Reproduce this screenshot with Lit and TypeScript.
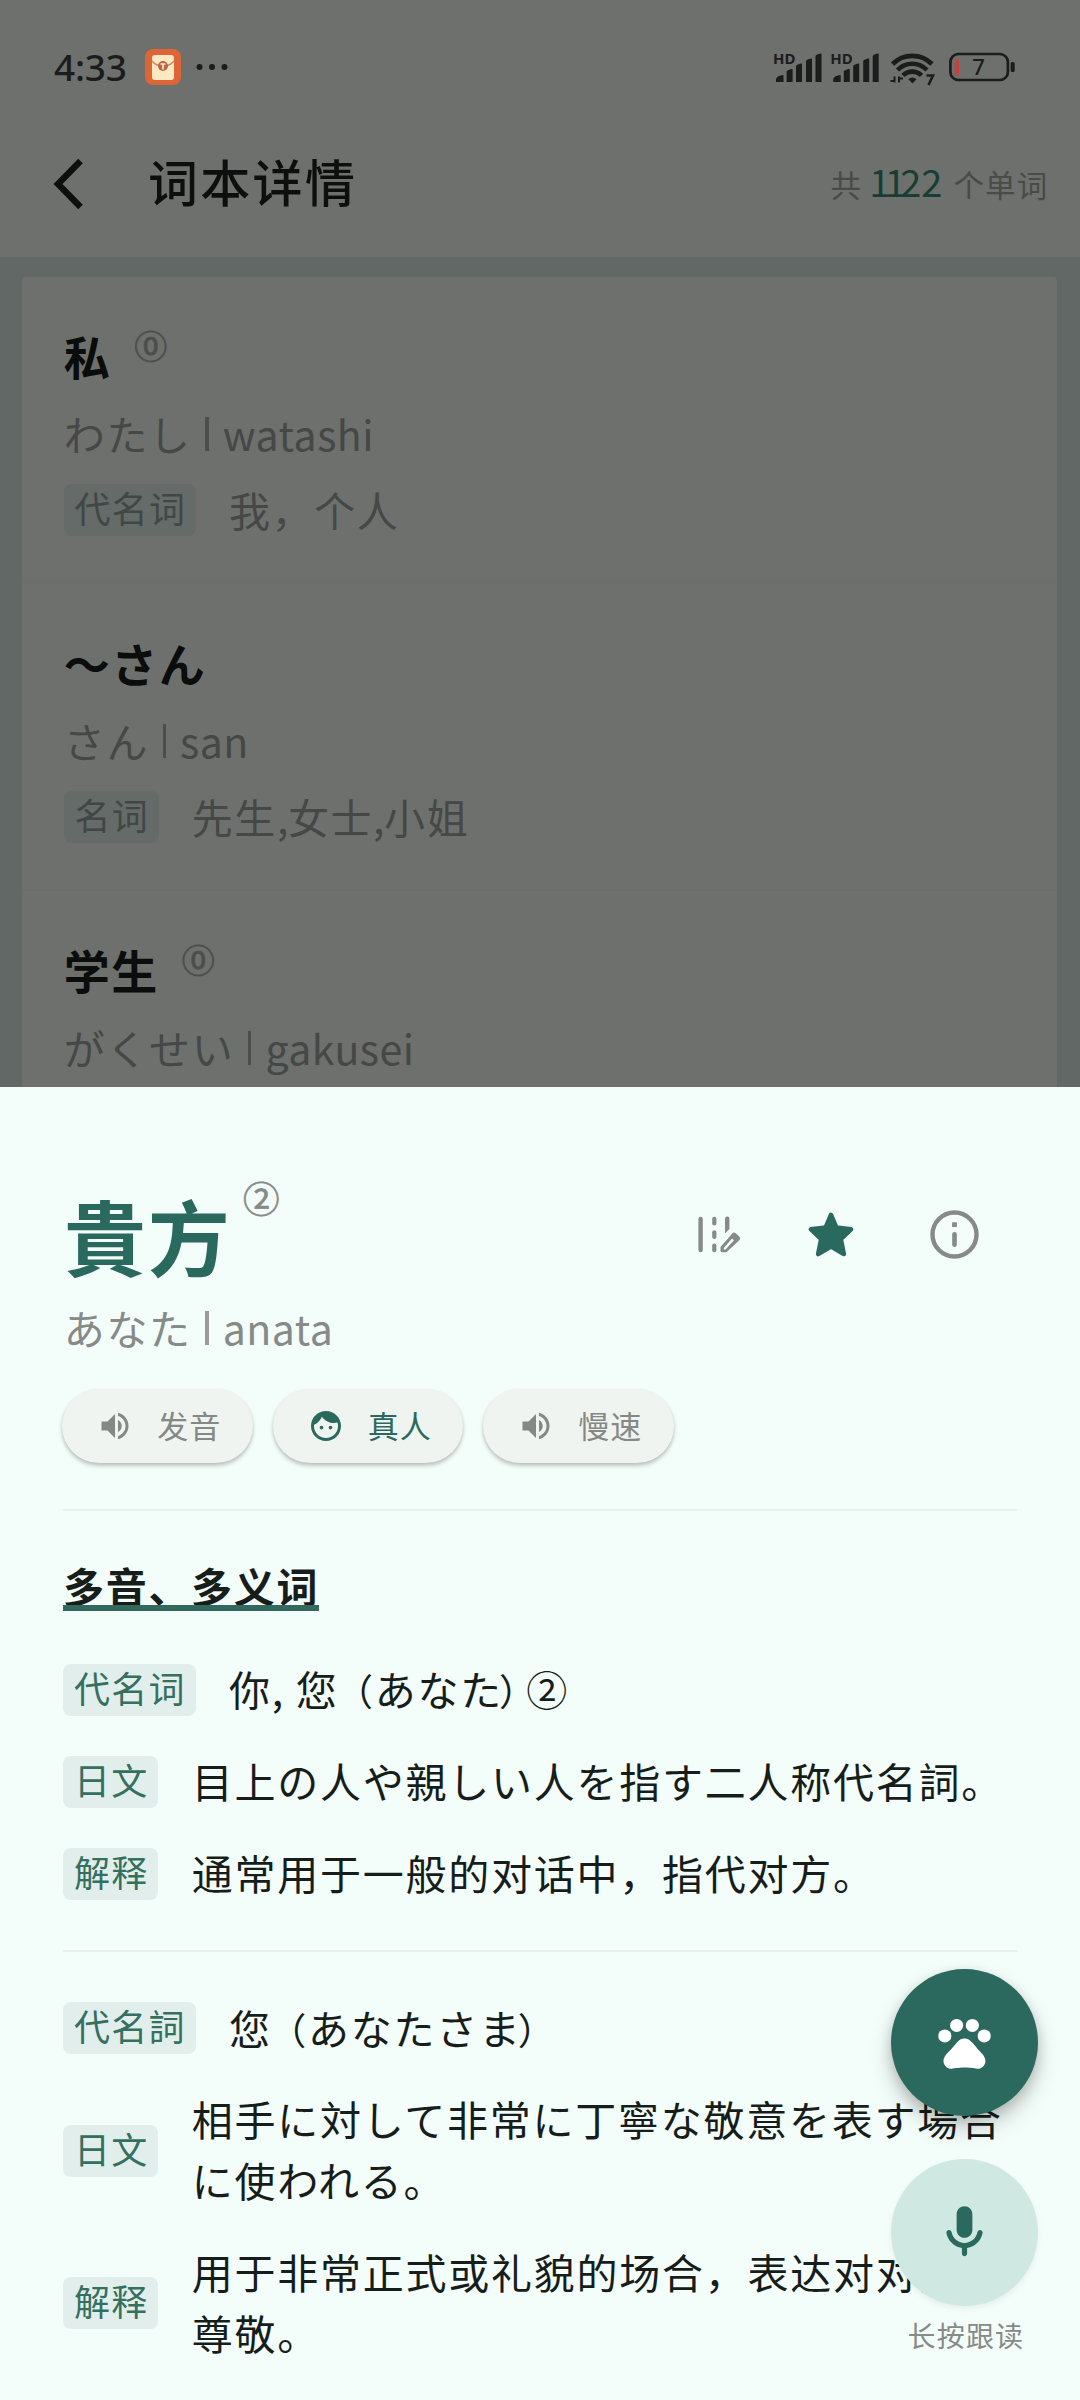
import { LitElement, html, css, svg, nothing } from "lit";
import { customElement, property } from "lit/decorators.js";

interface Word {
  word: string;
  accent?: string;
  kana: string;
  romaji: string;
  tag?: string;
  meaning?: string;
}

const WORDS: Word[] = [
  { word: "私", accent: "⓪", kana: "わたし", romaji: "watashi", tag: "代名词", meaning: "我，个人" },
  { word: "～さん", kana: "さん", romaji: "san", tag: "名词", meaning: "先生,女士,小姐" },
  { word: "学生", accent: "⓪", kana: "がくせい", romaji: "gakusei" },
];

const paren = (inner: string) =>
  html`<span class="open">（</span>${inner}<span class="close">）</span>`;

const SENSES = [
  [
    { tag: "代名词", text: html`你, 您${paren("あなた")}②` },
    { tag: "日文", text: "目上の人や親しい人を指す二人称代名詞。" },
    { tag: "解释", text: "通常用于一般的对话中，指代对方。" },
  ],
  [
    { tag: "代名詞", text: html`您${paren("あなたさま")}` },
    { tag: "日文", text: "相手に対して非常に丁寧な敬意を表す場合に使われる。" },
    { tag: "解释", text: "用于非常正式或礼貌的场合，表达对对方的尊敬。" },
  ],
];

const speaker = svg`<path d="M3 9v6h4l5 5V4L7 9H3zm13.5 3c0-1.77-1.02-3.29-2.5-4.03v8.05c1.48-.73 2.5-2.25 2.5-4.02zM14 3.23v2.06c2.89.86 5 3.54 5 6.71s-2.11 5.85-5 6.71v2.06c4.01-.91 7-4.49 7-8.77s-2.99-7.86-7-8.77z"/>`;
const face = svg`<path d="M9 11.75c-.69 0-1.25.56-1.25 1.25s.56 1.25 1.25 1.25 1.25-.56 1.25-1.25-.56-1.25-1.25-1.25zm6 0c-.69 0-1.25.56-1.25 1.25s.56 1.25 1.25 1.25 1.25-.56 1.25-1.25-.56-1.25-1.25-1.25zM12 2C6.48 2 2 6.48 2 12s4.48 10 10 10 10-4.48 10-10S17.52 2 12 2zm0 18c-4.41 0-8-3.59-8-8 0-.29.02-.58.05-.86 2.36-1.05 4.23-2.98 5.21-5.37C11.07 8.33 14.05 10 17.42 10c.78 0 1.53-.09 2.25-.26.21.71.33 1.47.33 2.26 0 4.41-3.59 8-8 8z"/>`;

const shared = css`
  * { box-sizing: border-box; margin: 0; }
  svg { display: block; flex: none; }
  .tag {
    flex: none;
    height: 52px;
    padding: 0 9.6px 0 11px;
    border-radius: 8px;
    font-size: 36px;
    letter-spacing: 1.3px;
    line-height: 46px;
  }
  .reading {
    display: flex;
    align-items: center;
    height: 60px;
    font-size: 41px;
    line-height: 60px;
    letter-spacing: 1.7px;
    white-space: nowrap;
  }
  .bar { width: 3.4px; height: 34px; margin: 2px 14px 0 13.5px; background: currentColor; opacity: .85; }
  .romaji { letter-spacing: .5px; }
  .accent { -webkit-text-stroke: .7px currentColor; }
`;

@customElement("status-bar")
class StatusBar extends LitElement {
  static styles = [shared, css`
    :host { display: flex; align-items: center; height: 134px; padding: 0 64px 0 54px; color: #1b1d1c; }
    .time { font: 500 37px/40px "Noto Sans", sans-serif; width: 91px; letter-spacing: -.2px; }
    .dots { margin-left: 15px; }
    .right { margin-left: auto; overflow: visible; }
  `];
  render() {
    const signal = (x: number) => svg`
      <g transform="translate(${x} 0)">
        <text x="-1" y="14.500" font-size="15" font-weight="700" font-family="Noto Sans, sans-serif">HD</text>
        <path d="M2 33v-3q1-3.500 7.500-4v7zM12.600 33V22.500q1-2 6-2.500V33zM22 33V17q1-2 6-2.500V33zM32 33V12q1-2 6-2.500V33zM41.500 33V7q1-2 6-2.500V33z"/>
      </g>`;
    return html`
      <span class="time">4:33</span>
      <svg width="36" height="36" viewBox="0 0 36 36">
        <rect width="36" height="36" rx="8" fill="#de6536"/>
        <rect x="7" y="6" width="22" height="25" rx="3" fill="#ffe9c2"/>
        <path d="M7 12q4 5 11 5t11-5" fill="none" stroke="#c98a55" stroke-width="1.300"/>
        <circle cx="18" cy="17" r="5" fill="#b9694a"/>
        <path d="M15.500 15h5M18 15v5.500" stroke="#ffe9c2" stroke-width="1.600"/>
      </svg>
      <svg class="dots" width="34" height="10" viewBox="0 0 34 10" fill="currentColor"><circle cx="3.500" cy="5" r="3"/><circle cx="16" cy="5" r="3"/><circle cx="28.500" cy="5" r="3"/></svg>
      <svg class="right" width="242" height="40" viewBox="0 -2 242 40" fill="currentColor">
        ${signal(0)}${signal(57.2)}
        <g fill="none" stroke="currentColor" stroke-width="4.600">
          <path d="M118.500 15a28 28 0 0 1 39.500 0M123.500 21a20.500 20.500 0 0 1 29.500 0M129 26.500a13 13 0 0 1 18.500 0"/>
        </g>
        <path d="M134.200 30q4.200-3 8.400 0l-4.200 4.500z"/>
        <path d="M120.500 27.500v6M116.500 32h4M125 33.500v-6M125 29.500h4" fill="none" stroke="currentColor" stroke-width="2"/>
        <path d="M152.500 26.500h6.500l-4.500 9.500" fill="none" stroke="currentColor" stroke-width="2.600"/>
        <rect x="176.400" y="5" width="57.500" height="26" rx="8" fill="none" stroke="currentColor" stroke-width="2.700"/>
        <rect x="236.700" y="13" width="4" height="10" rx="1.500"/>
        <rect x="180.600" y="10" width="4.400" height="16.500" rx="1.500" fill="#c2443f"/>
        <text x="198.300" y="25.800" font-size="22" font-weight="500" font-family="Noto Sans, sans-serif">7</text>
      </svg>`;
  }
}

@customElement("word-row")
class WordRow extends LitElement {
  @property({ attribute: false }) item!: Word;
  static styles = [shared, css`
    :host { display: block; height: 307px; padding: 48px 41px 0; color: #454846; border-bottom: 2px solid #6b6e6b; }
    .head { display: flex; height: 60px; padding-left: .7px; }
    .word { font-size: 46px; line-height: 60px; font-weight: 700; letter-spacing: 1.5px; color: #0b0d0c; }
    .accent { margin-left: 23px; font-size: 33px; line-height: 41px; color: #4b4e4c; }
    .reading { margin-top: 18px; padding-left: .7px; }
    .line { display: flex; align-items: center; margin-top: 17px; height: 60px; gap: 33px; padding-left: .5px; }
    .tag { background: #646b69; color: #404745; }
    .meaning { font-size: 41px; letter-spacing: 1.6px; line-height: 58px; padding-bottom: 2px; }
    .comma { margin-right: -2px; }
  `];
  render() {
    const w = this.item;
    const meaning = (w.meaning ?? "").split(",");
    return html`
      <div class="head"><span class="word">${w.word}</span>${w.accent ? html`<span class="accent">${w.accent}</span>` : nothing}</div>
      <div class="reading"><span>${w.kana}</span><i class="bar"></i><span class="romaji">${w.romaji}</span></div>
      ${w.tag
        ? html`<div class="line"><span class="tag">${w.tag}</span><span class="meaning">${meaning.map((m, i) => html`${i ? html`<span class="comma">,</span>` : nothing}${m}`)}</span></div>`
        : nothing}`;
  }
}

@customElement("word-sheet")
class WordSheet extends LitElement {
  static styles = [shared, css`
    :host { display: block; position: relative; height: 1313px; padding: 98px 62.5px 0 63px; background: #f3fdf9; color: #161d1b; overflow: hidden; }
    .head { display: flex; height: 100px; color: #868a88; }
    .word { font-size: 82px; line-height: 100px; font-weight: 700; letter-spacing: 1.8px; color: #2a6a5e; margin-left: 1px; }
    .accent { margin: -7px 0 0 11.5px; font-size: 36.5px; line-height: 40px; }
    .actions { display: flex; align-items: center; margin-left: auto; padding: 0 39px 1.5px 0; }
    .actions svg:nth-child(2) { margin: 0 76px 0 67px; }
    .reading { margin-top: 12px; padding-left: .7px; color: #868a88; }
    .pills { display: flex; gap: 20px; margin: 31.5px 0 46px -.7px; }
    .pill {
      display: flex; align-items: center; width: 190.5px; height: 74.5px; padding-left: 35px; gap: 24px;
      border-radius: 38px; background: #eff4f0; color: #848986; font-size: 31px; letter-spacing: 1px;
      box-shadow: 0 3px 4px rgba(0, 0, 0, .2), 0 1px 3px rgba(0, 0, 0, .08);
    }
    .pill span { line-height: 40px; padding-bottom: 2px; }
    .pill.on { color: #2a6a5e; }
    .rule { height: 2px; margin-right: 1px; background: #e8f1ee; }
    .title { position: relative; width: 256px; height: 50px; margin: 50px 0 48.6px; font-size: 41px; letter-spacing: 1.7px; line-height: 49px; font-weight: 700; white-space: nowrap; }
    .title::after { content: ""; position: absolute; left: 0; right: 0; bottom: 0; height: 6px; background: #33695d; }
    .senses { display: grid; gap: 31px; }
    .sense { display: flex; align-items: flex-start; gap: 33.5px; }
    .sense .tag { align-self: center; }
    .sense .text { flex: 1; font-size: 41px; letter-spacing: 1.75px; line-height: 60.8px; margin: -1.3px -12px 1.3px 0; }
    .tag { background: #e2eeeb; color: #34705f; }
    .mid { margin: 46px 0; }
    .open, .close { font-size: 37px; font-feature-settings: "halt"; line-height: 1; }
    .open { margin-left: 16px; }
    .close { margin: 0 7px 0 -4px; }
    .fab { position: absolute; left: 891px; width: 147px; height: 147px; border-radius: 50%; display: grid; place-items: center; }
    .paw { top: 882px; background: #2b685d; color: #fff; box-shadow: 0 12px 22px rgba(0, 0, 0, .2), 0 4px 12px rgba(0, 0, 0, .14); }
    .mic { top: 1072px; background: #d0e8e2; color: #2a6a5e; box-shadow: 0 3px 6px rgba(0, 0, 0, .06); }
    .hint { position: absolute; left: 907.5px; top: 1228px; font-size: 28px; line-height: 40px; letter-spacing: 1.2px; color: #868a88; white-space: nowrap; }
  `];
  render() {
    const icon = (size: number, body: unknown) =>
      html`<svg width=${size} height=${size} viewBox="0 0 24 24" fill="currentColor">${body}</svg>`;
    const senses = (list: (typeof SENSES)[number]) => html`<div class="senses">
      ${list.map((s) => html`<div class="sense"><span class="tag">${s.tag}</span><span class="text">${s.text}</span></div>`)}
    </div>`;
    return html`
      <div class="head">
        <span class="word">貴方</span><span class="accent">②</span>
        <div class="actions">
          <svg width="43" height="37" viewBox="0 0 43 37" fill="currentColor">
            <rect x=".4" y=".7" width="4.400" height="35.600" rx="2.200"/>
            <rect x="14.200" y=".7" width="4.200" height="8.900" rx="2.100"/>
            <rect x="14.200" y="14.200" width="4.200" height="8.900" rx="2.100"/>
            <rect x="14.200" y="27.400" width="4.200" height="8.900" rx="2.100"/>
            <path d="M27 2.800a2.200 2.200 0 0 1 4.400 0V13L27 17.500z"/>
            <path fill-rule="evenodd" d="M22.500 31 34.500 17.200q1.500-1.500 3-.2l4 3.700q1.500 1.500 0 3.200L29.500 35.300q-.8 1-2 1h-3.500q-1.500 0-1.500-1.500zM25.800 32v1.600h1.800L36 24.200l-2-1.800z"/>
          </svg>
          <svg width="46" height="45" viewBox="0 0 46 45" fill="#2a6a5e" stroke="#2a6a5e" stroke-width="4.600" stroke-linejoin="round">
            <path d="M23 3 28.300 15.500 43 17.400 32.800 27 35.800 42 23 34.600 10.200 42 13.200 27 3 17.400 17.700 15.500z"/>
          </svg>
          <svg width="49" height="49" viewBox="0 0 49 49" fill="currentColor">
            <circle cx="24.500" cy="24.500" r="22" fill="none" stroke="currentColor" stroke-width="4.400"/>
            <rect x="22.100" y="12.300" width="4.800" height="4.800" rx=".6"/>
            <rect x="22.200" y="22" width="4.600" height="15" rx="2.300"/>
          </svg>
        </div>
      </div>
      <div class="reading"><span>あなた</span><i class="bar"></i><span class="romaji">anata</span></div>
      <div class="pills">
        <div class="pill">${icon(36, speaker)}<span>发音</span></div>
        <div class="pill on">${icon(36, face)}<span>真人</span></div>
        <div class="pill">${icon(36, speaker)}<span>慢速</span></div>
      </div>
      <div class="rule"></div>
      <h2 class="title">多音、多义词</h2>
      ${senses(SENSES[0])}
      <div class="rule mid"></div>
      ${senses(SENSES[1])}
      <div class="fab paw">${icon(63, svg`<circle cx="4.500" cy="9.500" r="2.500"/><circle cx="9" cy="5.500" r="2.500"/><circle cx="15" cy="5.500" r="2.500"/><circle cx="19.500" cy="9.500" r="2.500"/><path d="M17.340 14.860c-.87-1.020-1.600-1.890-2.480-2.910-.46-.54-1.050-1.080-1.750-1.320-.11-.04-.22-.07-.33-.09-.25-.04-.52-.04-.78-.04s-.53 0-.79.05c-.11.02-.22.05-.33.09-.7.24-1.280.78-1.750 1.320-.87 1.020-1.600 1.890-2.480 2.910-1.310 1.310-2.920 2.760-2.620 4.790.29 1.020 1.020 2.030 2.330 2.320.73.15 3.060-.44 5.540-.44h.18c2.480 0 4.810.58 5.540.44 1.310-.29 2.040-1.310 2.330-2.320.31-2.040-1.300-3.490-2.610-4.800z"/>`)}</div>
      <div class="fab mic">${icon(63, svg`<path d="M12 14c1.660 0 3-1.340 3-3V5c0-1.660-1.340-3-3-3S9 3.340 9 5v6c0 1.660 1.340 3 3 3zm5.910-3c-.49 0-.9.36-.98.85C16.520 14.200 14.470 16 12 16s-4.520-1.800-4.930-4.150c-.08-.49-.49-.85-.98-.85-.61 0-1.090.54-1 1.140.49 3 2.890 5.350 5.910 5.780V20c0 .55.45 1 1 1s1-.45 1-1v-2.080c3.020-.43 5.420-2.780 5.910-5.780.1-.6-.39-1.140-1-1.140z"/>`)}</div>
      <div class="hint">长按跟读</div>`;
  }
}

@customElement("app-root")
class AppRoot extends LitElement {
  static styles = [shared, css`
    :host {
      display: flex; flex-direction: column; width: 1080px; height: 2400px; overflow: hidden;
      font-family: "Noto Sans CJK SC", "Noto Sans CJK JP", sans-serif; background: #626866;
      font-kerning: normal; text-spacing-trim: space-all;
    }
    .top { background: #6d706c; height: 257px; flex: none; }
    .nav { display: flex; align-items: center; height: 98px; padding: 0 31.5px 0 52.5px; color: #0d0f0e; }
    .nav svg { margin-top: 2px; }
    .nav h1 { font-size: 50px; font-weight: 500; letter-spacing: 2.3px; line-height: 70px; margin: -7px 0 0 65.5px; }
    .count { margin: -6px 0 0 auto; display: flex; align-items: baseline; font-size: 30.500px; letter-spacing: 1.2px; color: #484b49; }
    .count b { margin: 0 11px 0 7px; font-weight: 400; font-size: 38px; letter-spacing: 0; color: #173e34; }
    .ones { letter-spacing: -5.6px; }
    .list { margin: 20px 23px 0 22px; height: 810px; background: #6d706c; overflow: hidden; border-radius: 4px 4px 0 0; flex: none; }
    word-sheet { flex: none; }
  `];
  render() {
    return html`
      <div class="top">
        <status-bar></status-bar>
        <div class="nav">
          <svg width="30" height="52" viewBox="0 0 30 52" fill="none" stroke="currentColor" stroke-width="6.400"><path d="M27.500 3 5 26l22.500 23"/></svg>
          <h1>词本详情</h1>
          <div class="count"><span>共</span><b><span class="ones">11</span>22</b><span>个单词</span></div>
        </div>
      </div>
      <div class="list">${WORDS.map((w) => html`<word-row .item=${w}></word-row>`)}</div>
      <word-sheet></word-sheet>`;
  }
}
